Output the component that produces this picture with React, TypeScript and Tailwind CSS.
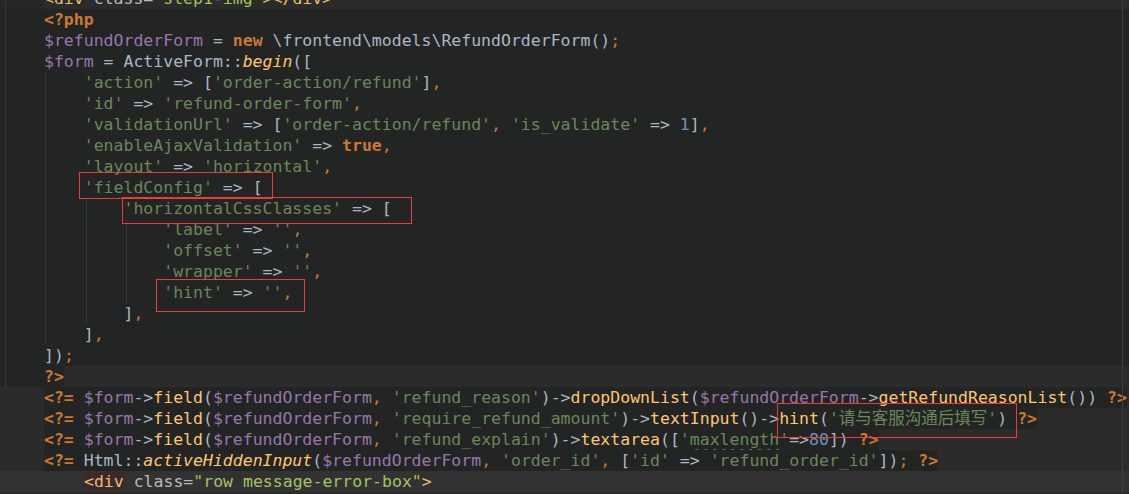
import React from "react";

type Tok = [string, string];

const KW = "text-[#cc7832] font-bold";
const OR = "text-[#cc7832]";
const VR = "text-[#9876aa]";
const ST = "text-[#6a8759]";
const FN = "text-[#ffc66d]";
const FI = "text-[#ffc66d] italic";
const DF = "text-[#a9b7c6]";
const NM = "text-[#6897bb]";
const TG = "text-[#e8bf6a]";
const AT = "text-[#bababa]";
const AV = "text-[#a5c261]";
const WV = "text-[#6a8759] underline decoration-wavy decoration-[#5f8c5f] underline-offset-[3px]";
const TH = "text-[#e8bf6a] bg-[#3b2a29]";

const phpRows: Tok[][] = [
  [["<?php", KW]],
  [["$refundOrderForm", VR], [" = ", DF], ["new", KW], [" \\frontend\\models\\RefundOrderForm()", DF], [";", OR]],
  [["$form", VR], [" = ActiveForm::", DF], ["begin", FI], ["([", DF]],
  [["    'action'", ST], [" => [", DF], ["'order-action/refund'", ST], ["]", DF], [",", OR]],
  [["    'id'", ST], [" => ", DF], ["'refund-order-form'", ST], [",", OR]],
  [["    'validationUrl'", ST], [" => [", DF], ["'order-action/refund'", ST], [",", OR], [" ", DF], ["'is_validate'", ST], [" => ", DF], ["1", NM], ["]", DF], [",", OR]],
  [["    'enableAjaxValidation'", ST], [" => ", DF], ["true", KW], [",", OR]],
  [["    'layout'", ST], [" => ", DF], ["'horizontal'", ST], [",", OR]],
  [["    'fieldConfig'", ST], [" => [", DF]],
  [["        'horizontalCssClasses'", ST], [" => [", DF]],
  [["            'label'", ST], [" => ", DF], ["''", ST], [",", OR]],
  [["            'offset'", ST], [" => ", DF], ["''", ST], [",", OR]],
  [["            'wrapper'", ST], [" => ", DF], ["''", ST], [",", OR]],
  [["            'hint'", ST], [" => ", DF], ["''", ST], [",", OR]],
  [["        ]", DF], [",", OR]],
  [["    ]", DF], [",", OR]],
  [["])", DF], [";", OR]],
];

const echoRows: Tok[][] = [
  [["<?=", KW], [" ", DF], ["$form", VR], ["->", DF], ["field", FN], ["(", DF], ["$refundOrderForm", VR], [",", OR], [" ", DF], ["'refund_reason'", ST], [")->", DF], ["dropDownList", FN], ["(", DF], ["$refundOrderForm", VR], ["->", DF], ["getRefundReasonList", FN], ["())", DF], [" ", DF], ["?>", KW]],
  [["<?=", KW], [" ", DF], ["$form", VR], ["->", DF], ["field", FN], ["(", DF], ["$refundOrderForm", VR], [",", OR], [" ", DF], ["'require_refund_amount'", ST], [")->", DF], ["textInput", FN], ["()->", DF], ["hint", FN], ["(", DF], ["'请与客服沟通后填写'", ST], [")", DF], [" ", DF], ["?>", KW]],
  [["<?=", KW], [" ", DF], ["$form", VR], ["->", DF], ["field", FN], ["(", DF], ["$refundOrderForm", VR], [",", OR], [" ", DF], ["'refund_explain'", ST], [")->", DF], ["textarea", FN], ["([", DF], ["'", ST], ["maxlength", WV], ["'", ST], ["=>", DF], ["80", NM], ["])", DF], [" ", DF], ["?>", KW]],
  [["<?=", KW], [" ", DF], ["Html::", DF], ["activeHiddenInput", FI], ["(", DF], ["$refundOrderForm", VR], [",", OR], [" ", DF], ["'order_id'", ST], [",", OR], [" ", DF], ["[", DF], ["'id'", ST], [" => ", DF], ["'refund_order_id'", ST], ["])", DF], [";", OR], [" ", DF], ["?>", KW]],
];

function Toks({ toks }: { toks: Tok[] }) {
  return (
    <>
      {toks.map(([t, c], i) => (
        <span key={i} className={c}>
          {t}
        </span>
      ))}
    </>
  );
}

export default function App() {
  return (
    <div
      className="relative w-full h-[494px] overflow-hidden bg-[#2b2b2b] text-[16.5px] leading-[21px]"
      style={{ fontFamily: '"DejaVu Sans Mono", "Noto Sans CJK SC", monospace' }}
    >
      <div className="-mt-[12px] flex flex-col">
        {/* HTML line above */}
        <div className="flex h-[21px]">
          <div className="w-[44px] shrink-0 bg-[#262727]" />
          <div className="flex-1 whitespace-pre bg-[#2b2b2b]">
            <Toks toks={[["<div", TG], [" class=", AT], ['"step1-img"', AV], ["></div>", TG]]} />
          </div>
        </div>
        {/* PHP block */}
        {phpRows.map((r, i) => (
          <div key={i} className="flex h-[21px] bg-[#232525]">
            <div className="w-[44px] shrink-0" />
            <div className="whitespace-pre shrink-0">
              <Toks toks={r} />
            </div>
          </div>
        ))}
        <div className="flex h-[21px]">
          <div className="w-[44px] shrink-0 bg-[#232525]" />
          <div className="whitespace-pre shrink-0 bg-[#232525] pr-[0px]">
            <Toks toks={[["?>", KW]]} />
          </div>
          <div className="flex-1 bg-[#2b2b2b]" />
        </div>
        {echoRows.map((r, i) => (
          <div key={i} className="flex h-[21px] bg-[#2b2b2b]">
            <div className="w-[44px] shrink-0" />
            <div className="whitespace-pre shrink-0 bg-[#232525]">
              <Toks toks={r} />
            </div>
          </div>
        ))}
        <div className="flex h-[21px] bg-[#323232]">
          <div className="w-[84px] shrink-0" />
          <div className="whitespace-pre shrink-0">
            <Toks toks={[["<div", TH], [" class=", AT], ['"row message-error-box"', AV], [">", TG]]} />
          </div>
        </div>
      </div>

      {/* indent guides */}
      <div className="absolute left-[5px] top-0 h-[388px] w-px bg-[#373939]" />
      <div className="absolute left-[45px] top-[72px] h-[273px] w-px bg-[#373939]" />
      <div className="absolute left-[86px] top-[198px] h-[125px] w-px bg-[#373939]" />
      <div className="absolute left-[126px] top-[219px] h-[84px] w-px bg-[#373939]" />

      {/* right margin */}
      <div className="absolute left-[1122px] top-0 h-full w-px bg-[#3e3e3e]" />

      {/* red annotation boxes */}
      <div className="absolute left-[79px] top-[172px] w-[194px] h-[27px] border border-[#f03a3a]" />
      <div className="absolute left-[122px] top-[197px] w-[290px] h-[27px] border border-[#f03a3a]" />
      <div className="absolute left-[156px] top-[279px] w-[149px] h-[33px] border border-[#f03a3a]" />
      <div className="absolute left-[777px] top-[403px] w-[240px] h-[35px] border border-[#f03a3a]" />
    </div>
  );
}
